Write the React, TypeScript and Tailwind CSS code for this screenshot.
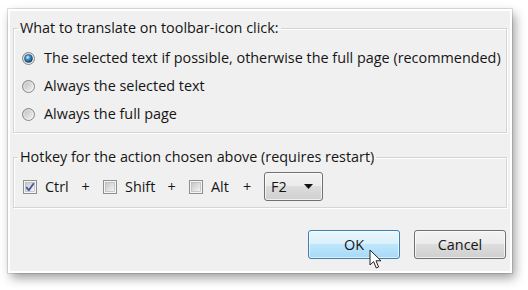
import React from "react";

const font = { fontFamily: '"Open Sans", "Noto Sans", sans-serif' };

function Radio({ checked }: { checked?: boolean }) {
  return (
    <svg width="13" height="13" viewBox="0 0 13 13" className="shrink-0">
      <defs>
        <linearGradient id="rg" x1="0" y1="0" x2="1" y2="1">
          <stop offset="0" stopColor="#b9b9b9" />
          <stop offset="1" stopColor="#f8f8f8" />
        </linearGradient>
        <radialGradient id="dot" cx="0.4" cy="0.35" r="0.7">
          <stop offset="0" stopColor="#e2f4ff" />
          <stop offset="0.4" stopColor="#3f93c9" />
          <stop offset="1" stopColor="#0c3a66" />
        </radialGradient>
      </defs>
      <circle cx="6.5" cy="6.5" r="6" fill="url(#rg)" stroke="#888" strokeWidth="1" />
      <circle cx="6.5" cy="6.5" r="4.6" fill="none" stroke="#ffffff" strokeOpacity="0.5" strokeWidth="0.8" />
      {checked && <circle cx="6.5" cy="6.5" r="4" fill="url(#dot)" stroke="#1d4c73" strokeWidth="0.6" />}
    </svg>
  );
}

function Check({ checked }: { checked?: boolean }) {
  return (
    <svg width="14" height="14" viewBox="0 0 14 14" className="shrink-0">
      <defs>
        <linearGradient id="cg" x1="0" y1="0" x2="1" y2="1">
          <stop offset="0" stopColor="#c4c4c4" />
          <stop offset="1" stopColor="#f7f7f7" />
        </linearGradient>
      </defs>
      <rect x="0.5" y="0.5" width="13" height="13" fill="#f4f4f4" stroke="#8e8f8f" />
      <rect x="2.5" y="2.5" width="9" height="9" fill="url(#cg)" stroke="#b0b0b0" strokeWidth="0.6" />
      {checked && (
        <path d="M3.2 7.2 L5.8 10.2 L10.8 3.2" fill="none" stroke="#3e5aa0" strokeWidth="1.8" strokeLinejoin="round" />
      )}
    </svg>
  );
}

export default function App() {
  return (
    <div className="w-[528px] h-[290px] bg-white pt-[9px] pl-[8px] text-[14.4px] text-[#151515]" style={font}>
      <div className="relative w-[504px] h-[264px] bg-[#f0f0f0] border-2 border-white shadow-[0_0_0_1px_rgba(0,0,0,0.12),3px_5px_10px_rgba(0,0,0,0.38)] pt-[8px] px-[3px] flex flex-col">
        <fieldset className="border border-[#d5d5d5] shadow-[inset_1px_1px_0_#ffffff,1px_1px_0_#ffffff] m-0 p-0">
          <legend className="ml-[4px] px-[2px] h-[18px] leading-[18px]">What to translate on toolbar-icon click:</legend>
          <div className="pt-[7px] pb-[4px] pl-[8px] flex flex-col">
            <div className="h-[28px] flex items-center gap-[9px]">
              <Radio checked />
              <span>The selected text if possible, otherwise the full page (recommended)</span>
            </div>
            <div className="h-[28px] flex items-center gap-[9px]">
              <Radio />
              <span>Always the selected text</span>
            </div>
            <div className="h-[28px] flex items-center gap-[9px]">
              <Radio />
              <span>Always the full page</span>
            </div>
          </div>
        </fieldset>

        <fieldset className="mt-[15px] border border-[#d5d5d5] shadow-[inset_1px_1px_0_#ffffff,1px_1px_0_#ffffff] m-0 p-0">
          <legend className="ml-[4px] px-[2px] h-[18px] leading-[18px]">Hotkey for the action chosen above (requires restart)</legend>
          <div className="pt-[6px] pb-[6px] pl-[9px] flex items-center">
            <Check checked />
            <span className="ml-[8px] w-[23px]">Ctrl</span>
            <span className="w-[35px] text-center">+</span>
            <Check />
            <span className="ml-[8px] w-[29px]">Shift</span>
            <span className="w-[35px] text-center">+</span>
            <Check />
            <span className="ml-[8px] w-[19px]">Alt</span>
            <span className="w-[34px] text-center">+</span>
            <div className="w-[59px] h-[29px] rounded-[3px] border border-[#707070] bg-[linear-gradient(#f2f2f2,#ebebeb_50%,#dddddd_50%,#cfcfcf)] shadow-[inset_0_0_0_1px_rgba(255,255,255,0.7)] flex items-center pl-[6px] pr-[9px] justify-between">
              <span>F2</span>
              <svg width="9" height="5" viewBox="0 0 9 5">
                <path d="M0 0 L9 0 L4.5 5 Z" fill="#111" />
              </svg>
            </div>
          </div>
        </fieldset>

        <div className="mt-[22px] flex justify-end gap-[14px] mr-[1px]">
          <div className="relative w-[92px] h-[29px] rounded-[3px] border border-[#3c7fb1] bg-[linear-gradient(#eaf6fd,#d9f0fc_50%,#bee6fd_50%,#a7d9f5)] shadow-[inset_0_0_0_1px_rgba(255,255,255,0.6)] flex items-center justify-center">
            <span>OK</span>
            <svg className="absolute left-[60px] top-[18px]" width="14" height="21" viewBox="0 0 14 21">
              <path d="M1 1 L1 16 L4.6 12.6 L7.3 19 L9.6 18 L7 11.8 L12 11.8 Z" fill="#ffffff" stroke="#222" strokeWidth="1" strokeLinejoin="round" />
            </svg>
          </div>
          <div className="w-[92px] h-[29px] rounded-[3px] border border-[#707070] bg-[linear-gradient(#f2f2f2,#ebebeb_50%,#dddddd_50%,#cfcfcf)] shadow-[inset_0_0_0_1px_rgba(255,255,255,0.7)] flex items-center justify-center">
            <span>Cancel</span>
          </div>
        </div>
      </div>
    </div>
  );
}
